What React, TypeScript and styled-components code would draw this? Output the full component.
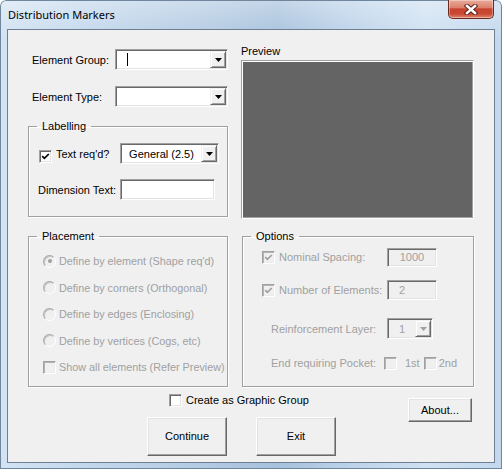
import React from "react";
import styled, { createGlobalStyle } from "styled-components";

const uiFont = `"Liberation Sans", Arial, sans-serif`;
const disabledInk = "#a0a0a0";

const GlobalStyle = createGlobalStyle`
    body {
        margin: 0;
        background: #ffffff;
    }
`

const Window = styled.div`
    width: 502px;
    height: 469px;
    box-sizing: border-box;
    display: flex;
    flex-direction: column;
    padding: 0 7px 6px 7px;
    border-radius: 6px 6px 0 0;
    background:
        linear-gradient(180deg, rgba(255, 255, 255, 0.35) 0%, rgba(255, 255, 255, 0) 40px),
        linear-gradient(90deg, #d3e3f3 0%, #c2d7ec 18%, #b3cbe3 40%, #a6c1dc 55%, #bcd3ea 70%, #cfe1f2 85%, #c3d8ed 100%);
    box-shadow: inset 0 0 0 1px #6f869d;
`

const TitleBar = styled.div`
    height: 29px;
    flex-shrink: 0;
    display: flex;
    justify-content: space-between;
    align-items: flex-start;
    padding-left: 1px;
`

const TitleText = styled.span`
    font-family: "Noto Sans", "Open Sans", sans-serif;
    font-size: 11px;
    line-height: 16px;
    margin-top: 7px;
    color: #000;
`

const CloseButton = styled.div`
    width: 46px;
    height: 19px;
    box-sizing: border-box;
    margin-right: 1px;
    border: 1px solid #6b2a1f;
    border-top: none;
    border-radius: 0 0 5px 5px;
    background: linear-gradient(180deg, #e9ab9b 0%, #dc826d 42%, #c7432d 50%, #c94a33 78%, #e18a70 100%);
    box-shadow: inset 0 0 0 1px rgba(255, 255, 255, 0.35);
    display: flex;
    align-items: center;
    justify-content: center;
`

const Client = styled.div`
    flex: 1;
    background: #f0f0f0;
    border: 1px solid #6d7f91;
    padding: 14px 0 0 20px;
    font-family: ${uiFont};
    font-size: 11px;
    color: #000;
    display: flex;
    flex-direction: column;
`

const Columns = styled.div`
    display: grid;
    grid-template-columns: 200px 233px;
    column-gap: 13px;
    row-gap: 10px;
`

const Stack = styled.div`
    display: flex;
    flex-direction: column;
`

const FieldRow = styled.div<{ $top?: number }>`
    display: flex;
    align-items: center;
    height: 21px;
    margin-top: ${p => p.$top ?? 0}px;
`

const FieldLabel = styled.span<{ $width: number; $indent?: number; $disabled?: boolean }>`
    width: ${p => p.$width}px;
    padding-left: ${p => p.$indent ?? 0}px;
    box-sizing: border-box;
    flex-shrink: 0;
    white-space: nowrap;
    color: ${p => (p.$disabled ? disabledInk : "#000")};
`

const sunken = `
    border: 1px solid;
    border-color: #a0a0a0 #ffffff #ffffff #a0a0a0;
    box-shadow: inset 1px 1px 0 #696969, inset -1px -1px 0 #e3e3e3;
`

const ComboBox = styled.div<{ $width: number; $disabled?: boolean }>`
    ${sunken}
    width: ${p => p.$width}px;
    height: 21px;
    box-sizing: border-box;
    padding: 1px;
    display: flex;
    align-items: center;
    background: ${p => (p.$disabled ? "#f0f0f0" : "#ffffff")};
    color: ${p => (p.$disabled ? disabledInk : "#000")};
`

const ComboText = styled.span<{ $center?: boolean; $indent?: number }>`
    flex: 1;
    text-align: ${p => (p.$center ? "center" : "left")};
    padding-left: ${p => p.$indent ?? 0}px;
    white-space: nowrap;
`

const Caret = styled.span`
    display: inline-block;
    width: 1px;
    height: 13px;
    background: #000;
    vertical-align: middle;
`

const DropButton = styled.div`
    width: 16px;
    height: 17px;
    box-sizing: border-box;
    background: #f0f0f0;
    border: 1px solid;
    border-color: #f0f0f0 #696969 #696969 #f0f0f0;
    box-shadow: inset 1px 1px 0 #ffffff, inset -1px -1px 0 #a0a0a0;
    display: flex;
    align-items: center;
    justify-content: center;
`

const TextBox = styled.div<{ $width: number; $height: number; $disabled?: boolean; $center?: boolean }>`
    ${sunken}
    width: ${p => p.$width}px;
    height: ${p => p.$height}px;
    box-sizing: border-box;
    display: flex;
    align-items: center;
    justify-content: ${p => (p.$center ? "center" : "flex-start")};
    padding-left: ${p => (p.$center ? 0 : 11)}px;
    background: ${p => (p.$disabled ? "#f0f0f0" : "#ffffff")};
    color: ${p => (p.$disabled ? disabledInk : "#000")};
`

const PreviewLabel = styled.span`
    line-height: 14px;
`

const PreviewCanvas = styled.div`
    margin-top: 2px;
    height: 159px;
    box-sizing: border-box;
    background: #646464;
    border: 1px solid;
    border-color: #a0a0a0 #ffffff #ffffff #a0a0a0;
    box-shadow: inset 1px 1px 0 #ffffff, inset -1px -1px 0 #a0a0a0;
`

const GroupBox = styled.fieldset<{ $top?: number; $shift?: number }>`
    margin: ${p => p.$top ?? 0}px 0 0 ${p => p.$shift ?? 0}px;
    padding: 0;
    min-width: 0;
    border: 1px solid #a0a0a0;
    box-shadow: 1px 1px 0 #ffffff, inset 1px 1px 0 #ffffff;
`

const Legend = styled.legend`
    margin-left: 8px;
    padding: 0 5px;
    line-height: 14px;
    color: #000;
`

const GroupBody = styled.div<{ $pad: string }>`
    padding: ${p => p.$pad};
    display: flex;
    flex-direction: column;
`

const CheckBox = styled.span<{ $disabled?: boolean }>`
    width: 13px;
    height: 13px;
    box-sizing: border-box;
    flex-shrink: 0;
    ${sunken}
    background: ${p => (p.$disabled ? "#f0f0f0" : "#ffffff")};
    box-shadow: ${p => (p.$disabled
        ? "inset 1px 1px 0 #b4b4b4, inset -1px -1px 0 #ececec"
        : "inset 1px 1px 0 #696969, inset -1px -1px 0 #e3e3e3")};
    display: flex;
    align-items: center;
    justify-content: center;
`

const CheckLabel = styled.span<{ $gap?: number; $disabled?: boolean }>`
    margin-left: ${p => p.$gap ?? 4}px;
    white-space: nowrap;
    color: ${p => (p.$disabled ? disabledInk : "#000")};
`

const CheckField = styled.div<{ $width?: number; $indent?: number }>`
    display: flex;
    align-items: center;
    width: ${p => (p.$width ? `${p.$width}px` : "auto")};
    padding-left: ${p => p.$indent ?? 0}px;
    box-sizing: border-box;
    flex-shrink: 0;
`

const RadioRow = styled.div`
    height: 26.5px;
    display: flex;
    align-items: center;
    padding-left: 14px;
    font-size: 10.8px;
    color: ${disabledInk};
`

const Radio = styled.span<{ $on?: boolean }>`
    width: 13px;
    height: 13px;
    box-sizing: border-box;
    border-radius: 50%;
    border: 1px solid;
    border-color: #a8a8a8 #ffffff #ffffff #a8a8a8;
    box-shadow: inset 1px 1px 0 #c4c4c4;
    background: #f0f0f0;
    flex-shrink: 0;
    margin-right: 3px;
    display: flex;
    align-items: center;
    justify-content: center;
    &::after {
        content: "";
        width: 4px;
        height: 4px;
        border-radius: 50%;
        background: ${p => (p.$on ? "#a0a0a0" : "transparent")};
    }
`

const OptionRow = styled.div<{ $top?: number; $height: number }>`
    display: flex;
    align-items: center;
    height: ${p => p.$height}px;
    margin-top: ${p => p.$top ?? 0}px;
`

const Footer = styled.div`
    display: flex;
    align-items: flex-start;
    margin-top: 7px;
    padding-left: 119px;
`

const FooterMain = styled.div`
    display: flex;
    flex-direction: column;
`

const GraphicRow = styled.div`
    display: flex;
    align-items: center;
    height: 13px;
    padding-left: 22px;
`

const ButtonRow = styled.div`
    display: flex;
    gap: 29px;
    margin-top: 10px;
`

const PushButton = styled.button<{ $width: number; $height: number; $top?: number; $left?: number }>`
    width: ${p => p.$width}px;
    height: ${p => p.$height}px;
    margin: ${p => p.$top ?? 0}px 0 0 ${p => p.$left ?? 0}px;
    padding: 0;
    box-sizing: border-box;
    background: #f0f0f0;
    font-family: ${uiFont};
    font-size: 11px;
    color: #000;
    border: 1px solid;
    border-color: #ffffff #696969 #696969 #ffffff;
    box-shadow: inset -1px -1px 0 #a0a0a0, inset 1px 1px 0 #e3e3e3;
`

const DownArrow = ({ colour = "#000" }: { colour?: string }) => (
    <svg width="7" height="4" viewBox="0 0 7 4">
        <polygon points="0,0 7,0 3.5,4" fill={colour} />
    </svg>
)

const Tick = ({ colour = "#000" }: { colour?: string }) => (
    <svg width="9" height="9" viewBox="0 0 9 9">
        <path d="M1.2 4.2 L3.4 6.4 L7.8 2" fill="none" stroke={colour} strokeWidth="1.7" />
    </svg>
)

const CloseGlyph = () => (
    <svg width="14" height="11" viewBox="0 0 14 11">
        <path d="M3 2 L11 9 M11 2 L3 9" stroke="#5a1e16" strokeWidth="4.4" strokeLinecap="square" />
        <path d="M3 2 L11 9 M11 2 L3 9" stroke="#ffffff" strokeWidth="2.6" strokeLinecap="square" />
    </svg>
)

const placementModes = [
    "Define by element (Shape req'd)",
    "Define by corners (Orthogonal)",
    "Define by edges (Enclosing)",
    "Define by vertices (Cogs, etc)",
];

export const DistributionMarkers = () => {
    return (
        <Window>
            <GlobalStyle />
            <TitleBar>
                <TitleText>Distribution Markers</TitleText>
                <CloseButton><CloseGlyph /></CloseButton>
            </TitleBar>
            <Client>
                <Columns>
                    <Stack>
                        <FieldRow $top={5}>
                            <FieldLabel $width={87} $indent={4}>Element Group:</FieldLabel>
                            <ComboBox $width={113}>
                                <ComboText $indent={10}><Caret /></ComboText>
                                <DropButton><DownArrow /></DropButton>
                            </ComboBox>
                        </FieldRow>
                        <FieldRow $top={16}>
                            <FieldLabel $width={87} $indent={4}>Element Type:</FieldLabel>
                            <ComboBox $width={113}>
                                <ComboText />
                                <DropButton><DownArrow /></DropButton>
                            </ComboBox>
                        </FieldRow>
                        <GroupBox $top={12}>
                            <Legend>Labelling</Legend>
                            <GroupBody $pad="10px 0 16px 10px">
                                <FieldRow>
                                    <CheckField $width={81}>
                                        <CheckBox style={{ marginTop: 6 }}><Tick /></CheckBox>
                                        <CheckLabel>Text req'd?</CheckLabel>
                                    </CheckField>
                                    <ComboBox $width={99}>
                                        <ComboText $center>General (2.5)</ComboText>
                                        <DropButton><DownArrow /></DropButton>
                                    </ComboBox>
                                </FieldRow>
                                <FieldRow $top={15}>
                                    <FieldLabel $width={82} $indent={0} style={{ marginLeft: -1 }}>Dimension Text:</FieldLabel>
                                    <TextBox $width={95} $height={21} />
                                </FieldRow>
                            </GroupBody>
                        </GroupBox>
                    </Stack>

                    <Stack>
                        <PreviewLabel>Preview</PreviewLabel>
                        <PreviewCanvas />
                    </Stack>

                    <GroupBox>
                        <Legend>Placement</Legend>
                        <GroupBody $pad="5px 0 5px 0">
                            {placementModes.map((mode, index) => (
                                <RadioRow key={mode}>
                                    <Radio $on={index === 0} />
                                    {mode}
                                </RadioRow>
                            ))}
                            <RadioRow>
                                <CheckBox $disabled />
                                <CheckLabel $gap={3} $disabled>Show all elements (Refer Preview)</CheckLabel>
                            </RadioRow>
                        </GroupBody>
                    </GroupBox>

                    <GroupBox $shift={1}>
                        <Legend>Options</Legend>
                        <GroupBody $pad="4px 0 15px 0">
                            <OptionRow $height={20}>
                                <CheckField $width={144} $indent={19}>
                                    <CheckBox $disabled><Tick colour={disabledInk} /></CheckBox>
                                    <CheckLabel $disabled>Nominal Spacing:</CheckLabel>
                                </CheckField>
                                <TextBox $width={50} $height={19} $disabled $center>1000</TextBox>
                            </OptionRow>
                            <OptionRow $top={13} $height={20}>
                                <CheckField $width={144} $indent={19}>
                                    <CheckBox $disabled><Tick colour={disabledInk} /></CheckBox>
                                    <CheckLabel $disabled>Number of Elements:</CheckLabel>
                                </CheckField>
                                <TextBox $width={50} $height={20} $disabled>2</TextBox>
                            </OptionRow>
                            <OptionRow $top={18} $height={21}>
                                <FieldLabel $width={144} $indent={28} $disabled>Reinforcement Layer:</FieldLabel>
                                <ComboBox $width={46} $disabled>
                                    <ComboText $indent={10}>1</ComboText>
                                    <DropButton><DownArrow colour={disabledInk} /></DropButton>
                                </ComboBox>
                            </OptionRow>
                            <OptionRow $top={17} $height={14}>
                                <FieldLabel $width={141} $indent={28} $disabled>End requiring Pocket:</FieldLabel>
                                <CheckBox $disabled />
                                <CheckLabel $gap={8} $disabled>1st</CheckLabel>
                                <CheckBox $disabled style={{ marginLeft: 4 }} />
                                <CheckLabel $gap={2} $disabled>2nd</CheckLabel>
                            </OptionRow>
                        </GroupBody>
                    </GroupBox>
                </Columns>

                <Footer>
                    <FooterMain>
                        <GraphicRow>
                            <CheckBox />
                            <CheckLabel>Create as Graphic Group</CheckLabel>
                        </GraphicRow>
                        <ButtonRow>
                            <PushButton $width={80} $height={39}>Continue</PushButton>
                            <PushButton $width={80} $height={39}>Exit</PushButton>
                        </ButtonRow>
                    </FooterMain>
                    <PushButton $width={64} $height={24} $top={4} $left={72}>About...</PushButton>
                </Footer>
            </Client>
        </Window>
    )
}

export default DistributionMarkers;
